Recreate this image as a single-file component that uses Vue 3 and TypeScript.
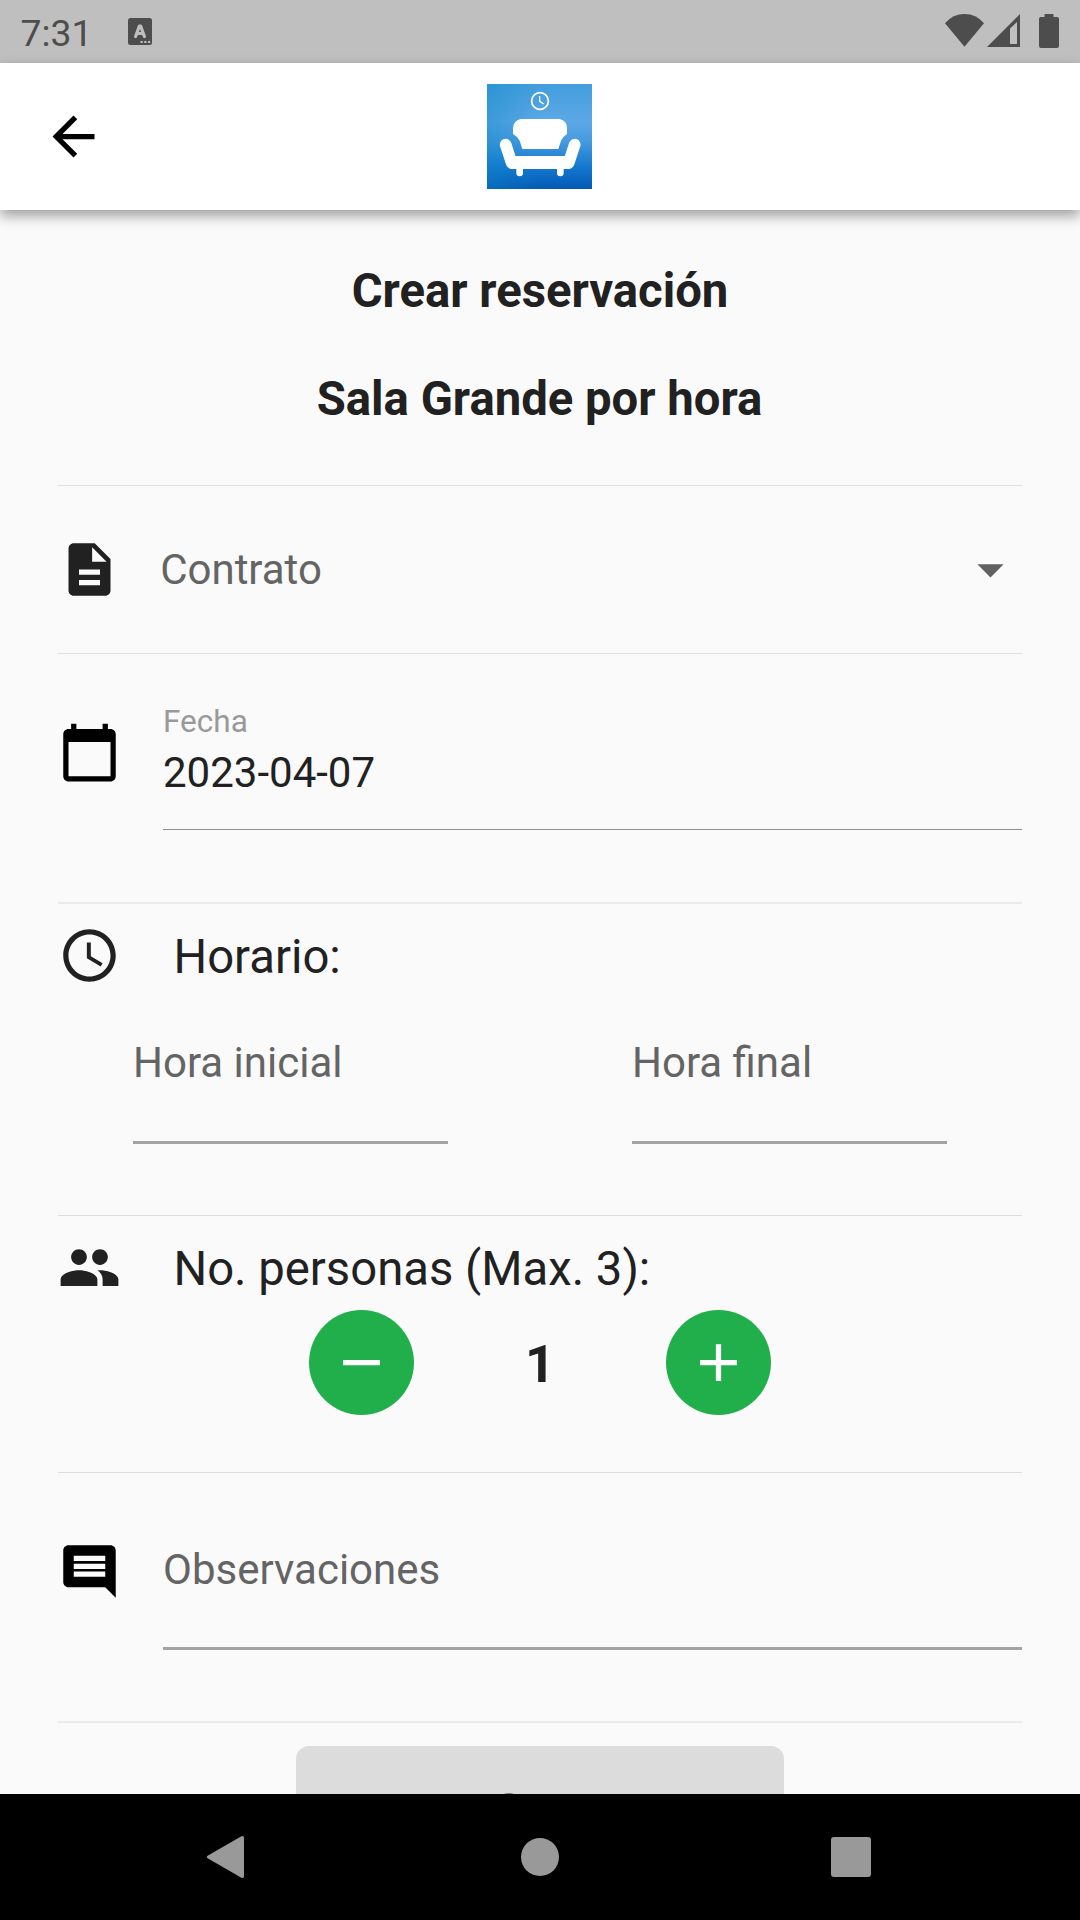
<script setup lang="ts">
import { ref } from 'vue'

const title = 'Crear reservación'
const room = 'Sala Grande por hora'
const date = ref('2023-04-07')
const maxPeople = 3
const people = ref(1)

function step(delta: number): void {
  people.value = Math.min(maxPeople, Math.max(1, people.value + delta))
}
</script>

<template>
  <div class="screen">
    <div class="status">
      <span class="time">7:31</span>
      <svg class="kbd" width="24" height="27" viewBox="0 0 24 27">
        <rect width="24" height="27" rx="2.5" fill="#4d4d4d" />
        <path d="M7.600 18.500 L11.400 8 H12.600 L16.400 18.500 M9 15.500 H15" fill="none" stroke="#bfbfbf" stroke-width="3.200" stroke-linecap="round" stroke-linejoin="round" />
        <path d="M12.500 23h2.200v2h-2.200zM16.300 23h2.200v2h-2.200zM20 23h2.200v2H20z" fill="#bfbfbf" />
      </svg>
      <svg class="signals" width="140" height="63" viewBox="940 0 140 63" fill="#4d4d4d">
        <path d="M945 23.2Q953 14 964.5 14T984 23.2L964.5 46.8Z" />
        <path fill-rule="evenodd" d="M987 47L1020 14V47ZM1010 28.5V44H1017V22Z" />
        <path d="M1044.5 14h9v3h3.5q2 0 2 2v27q0 2-2 2h-16q-2 0-2-2V19q0-2 2-2h3.500z" />
      </svg>
    </div>

    <header class="appbar">
      <svg class="back" width="63" height="63" viewBox="0 0 24 24">
        <path d="M20 11H7.830l5.590-5.590L12 4l-8 8 8 8 1.410-1.410L7.830 13H20v-2z" />
      </svg>
      <svg class="logo" width="105" height="105" viewBox="0 0 315 315">
        <defs>
          <linearGradient id="sky" x1="0" y1="0" x2="0" y2="1">
            <stop offset="0" stop-color="#439ddc" />
            <stop offset="0.36" stop-color="#5ca8e6" />
            <stop offset="0.55" stop-color="#469ade" />
            <stop offset="0.78" stop-color="#1579d0" />
            <stop offset="1" stop-color="#0459b4" />
          </linearGradient>
          <linearGradient id="shade" x1="0" y1="0" x2="1" y2="0">
            <stop offset="0" stop-color="#0a86c8" stop-opacity="0.4" />
            <stop offset="0.5" stop-color="#0a86c8" stop-opacity="0" />
          </linearGradient>
        </defs>
        <rect width="315" height="315" fill="url(#sky)" />
        <rect width="315" height="315" fill="url(#shade)" />
        <circle cx="159" cy="51" r="25" fill="none" stroke="#fff" stroke-width="5" />
        <path d="M158 37V52L170 60" fill="none" stroke="#fff" stroke-width="4" />
        <g fill="#fff">
          <path d="M101 105H218Q240 110 240 133V150Q227 158 222 170L214 195H106L98 170Q92 158 78 150V133Q79 110 101 105Z" />
          <path d="M70 216H248V255H70Z" />
        </g>
        <g fill="none" stroke="#fff" stroke-linecap="round">
          <path d="M56 182L74 237M263 182L245 237" stroke-width="35" />
          <path d="M98 250V267M220 250V267" stroke-width="20" />
        </g>
      </svg>
    </header>

    <main class="content">
      <section class="heading">
        <h1>{{ title }}</h1>
        <h2>{{ room }}</h2>
      </section>

      <section class="contract">
        <svg class="icon soft" viewBox="0 0 24 24">
          <path d="M14 2H6c-1.100 0-1.990.9-1.990 2L4 20c0 1.100.890 2 1.990 2H18c1.100 0 2-.9 2-2V8l-6-6zm2 16H8v-2h8v2zm0-4H8v-2h8v2zm-3-5V3.500L18.500 9H13z" />
        </svg>
        <span class="hint">Contrato</span>
        <svg class="icon caret" viewBox="0 0 24 24"><path d="M7 10l5 5 5-5z" /></svg>
      </section>

      <section class="date">
        <svg class="icon" viewBox="0 0 24 24">
          <path d="M20 3h-1V1h-2v2H7V1H5v2H4c-1.100 0-2 .9-2 2v16c0 1.100.9 2 2 2h16c1.100 0 2-.9 2-2V5c0-1.100-.9-2-2-2zm0 18H4V8h16v13z" />
        </svg>
        <div class="field">
          <span class="label">Fecha</span>
          <span class="value">{{ date }}</span>
        </div>
      </section>

      <section class="schedule">
        <div class="caption">
          <svg class="icon soft" viewBox="0 0 24 24">
            <path d="M11.990 2C6.470 2 2 6.480 2 12s4.470 10 9.990 10C17.520 22 22 17.520 22 12S17.520 2 11.990 2zM12 20c-4.420 0-8-3.580-8-8s3.580-8 8-8 8 3.580 8 8-3.580 8-8 8zm.5-13H11v6l5.250 3.150.750-1.230-4.500-2.670z" />
          </svg>
          <span>Horario:</span>
        </div>
        <div class="hours">
          <div class="hint">Hora inicial</div>
          <div class="hint">Hora final</div>
        </div>
      </section>

      <section class="people">
        <div class="caption">
          <svg class="icon soft" viewBox="0 0 24 24">
            <path d="M16 11c1.660 0 2.990-1.340 2.990-3S17.660 5 16 5c-1.660 0-3 1.340-3 3s1.340 3 3 3zm-8 0c1.660 0 2.990-1.340 2.990-3S9.660 5 8 5C6.340 5 5 6.340 5 8s1.340 3 3 3zm0 2c-2.330 0-7 1.170-7 3.500V19h14v-2.500c0-2.330-4.670-3.500-7-3.500zm8 0c-.290 0-.620.020-.970.050 1.160.840 1.970 1.970 1.970 3.450V19h6v-2.500c0-2.330-4.670-3.500-7-3.500z" />
          </svg>
          <span>No. personas (Max. {{ maxPeople }}):</span>
        </div>
        <div class="stepper">
          <button type="button" aria-label="Menos" @click="step(-1)">
            <svg viewBox="0 0 24 24"><path d="M19 13H5v-2h14v2z" /></svg>
          </button>
          <strong>{{ people }}</strong>
          <button type="button" aria-label="Más" @click="step(1)">
            <svg viewBox="0 0 24 24"><path d="M19 13h-6v6h-2v-6H5v-2h6V5h2v6h6v2z" /></svg>
          </button>
        </div>
      </section>

      <section class="notes">
        <svg class="icon" viewBox="0 0 24 24">
          <path d="M21.990 4c0-1.100-.890-2-1.990-2H4c-1.100 0-2 .9-2 2v12c0 1.100.9 2 2 2h14l4 4-.010-18zM18 14H6v-2h12v2zm0-3H6V9h12v2zm0-3H6V6h12v2z" />
        </svg>
        <div class="field hint">Observaciones</div>
      </section>

      <div class="submit">Crear</div>
    </main>

    <nav class="navbar">
      <svg width="1080" height="126" viewBox="0 0 1080 126" fill="#999">
        <path d="M208 61.500L241 42.500Q244 41 244 44V82Q244 85 241 83.500L208 64.500Q205.500 63 208 61.500Z" />
        <circle cx="540" cy="63" r="19" />
        <rect x="831" y="43" width="40" height="40" rx="3" />
      </svg>
    </nav>
  </div>
</template>

<style>
body {
  margin: 0;
}
</style>

<style scoped>
.screen {
  width: 1080px;
  height: 1920px;
  display: flex;
  flex-direction: column;
  overflow: hidden;
  background: #fafafa;
  color: #212121;
  font-family: Roboto, "Liberation Sans", sans-serif;
}

.screen * {
  box-sizing: border-box;
}

.status {
  flex: none;
  height: 63px;
  display: flex;
  background: #bfbfbf;
}

.time {
  width: 128px;
  padding-left: 20.5px;
  font-size: 37.3px;
  line-height: 67px;
  color: #4d4d4d;
}

.kbd {
  margin-top: 18px;
}

.signals {
  margin-left: auto;
}

.appbar {
  flex: none;
  height: 147px;
  padding-left: 42px;
  display: flex;
  align-items: center;
  background: #fff;
  box-shadow: 0 6px 12px rgba(0, 0, 0, 0.36);
  position: relative;
}

.logo {
  margin-left: 382px;
}

.content {
  flex: 1;
  min-height: 0;
  overflow: hidden;
  padding: 0 57.75px;
  display: flex;
  flex-direction: column;
}

.content > section {
  flex: none;
  border-bottom: 1px solid #dedede;
}

.icon {
  flex: none;
  display: block;
  width: 63px;
  height: 63px;
}

.soft {
  fill: #212121;
}

.hint {
  font-size: 42px;
  line-height: 50px;
  color: #646464;
}

.heading {
  height: 276px;
  padding-top: 54px;
  text-align: center;
}

h1,
h2 {
  margin: 0;
  font-size: 47.25px;
  line-height: 55px;
  font-weight: 700;
}

h2 {
  margin-top: 53px;
  padding-right: 1px;
}

.contract {
  height: 168px;
  display: flex;
  align-items: center;
}

.contract .hint {
  flex: 1;
  padding-left: 39.4px;
}

.caret {
  fill: #616161;
}

.content > .date {
  height: 250px;
  padding-top: 67px;
  display: flex;
  border-bottom: 2px solid #ebebeb;
}

.field {
  flex: 1;
  margin-left: 42.25px;
}

.date .field {
  height: 109px;
  display: flex;
  flex-direction: column;
  border-bottom: 1px solid #8e8e8e;
}

.label {
  margin-top: -17px;
  font-size: 31.5px;
  line-height: 36px;
  color: #999;
}

.value {
  margin-top: 8px;
  font-size: 42px;
  line-height: 50px;
}

.schedule {
  height: 312px;
  padding-top: 20px;
}

.caption {
  display: flex;
  height: 63px;
  font-size: 47.25px;
  line-height: 67px;
}

.caption span {
  margin-left: 52.7px;
}

.hours {
  display: flex;
  gap: 184px;
  padding: 51px 0 0 75.25px;
}

.hours .hint {
  width: 315px;
  height: 106px;
  border-bottom: 3px solid #a3a3a3;
}

.people {
  height: 257px;
  padding-top: 20px;
}

.stepper {
  display: flex;
  align-items: center;
  justify-content: center;
  margin-top: 11px;
}

button {
  width: 105px;
  height: 105px;
  padding: 0;
  border: 0;
  border-radius: 50%;
  background: #20af4b;
  display: grid;
  place-items: center;
}

button svg {
  width: 63px;
  height: 63px;
  fill: #fff;
}

strong {
  width: 252px;
  padding: 3px 0 0;
  text-align: center;
  font-size: 52.5px;
  line-height: 62px;
}

.content > .notes {
  height: 250px;
  padding-top: 67px;
  display: flex;
  border-bottom: 2px solid #ebebeb;
}

.notes .field {
  height: 110px;
  padding-top: 5px;
  border-bottom: 3px solid #a3a3a3;
}

.submit {
  flex: none;
  width: 488px;
  height: 126px;
  margin: 23px auto 0;
  border-radius: 13px;
  background: #dcdcdc;
  color: #777;
  text-align: center;
  font-size: 36.75px;
  line-height: 121px;
}

.navbar {
  flex: none;
  height: 126px;
  background: #000;
}

.navbar svg {
  display: block;
}
</style>
